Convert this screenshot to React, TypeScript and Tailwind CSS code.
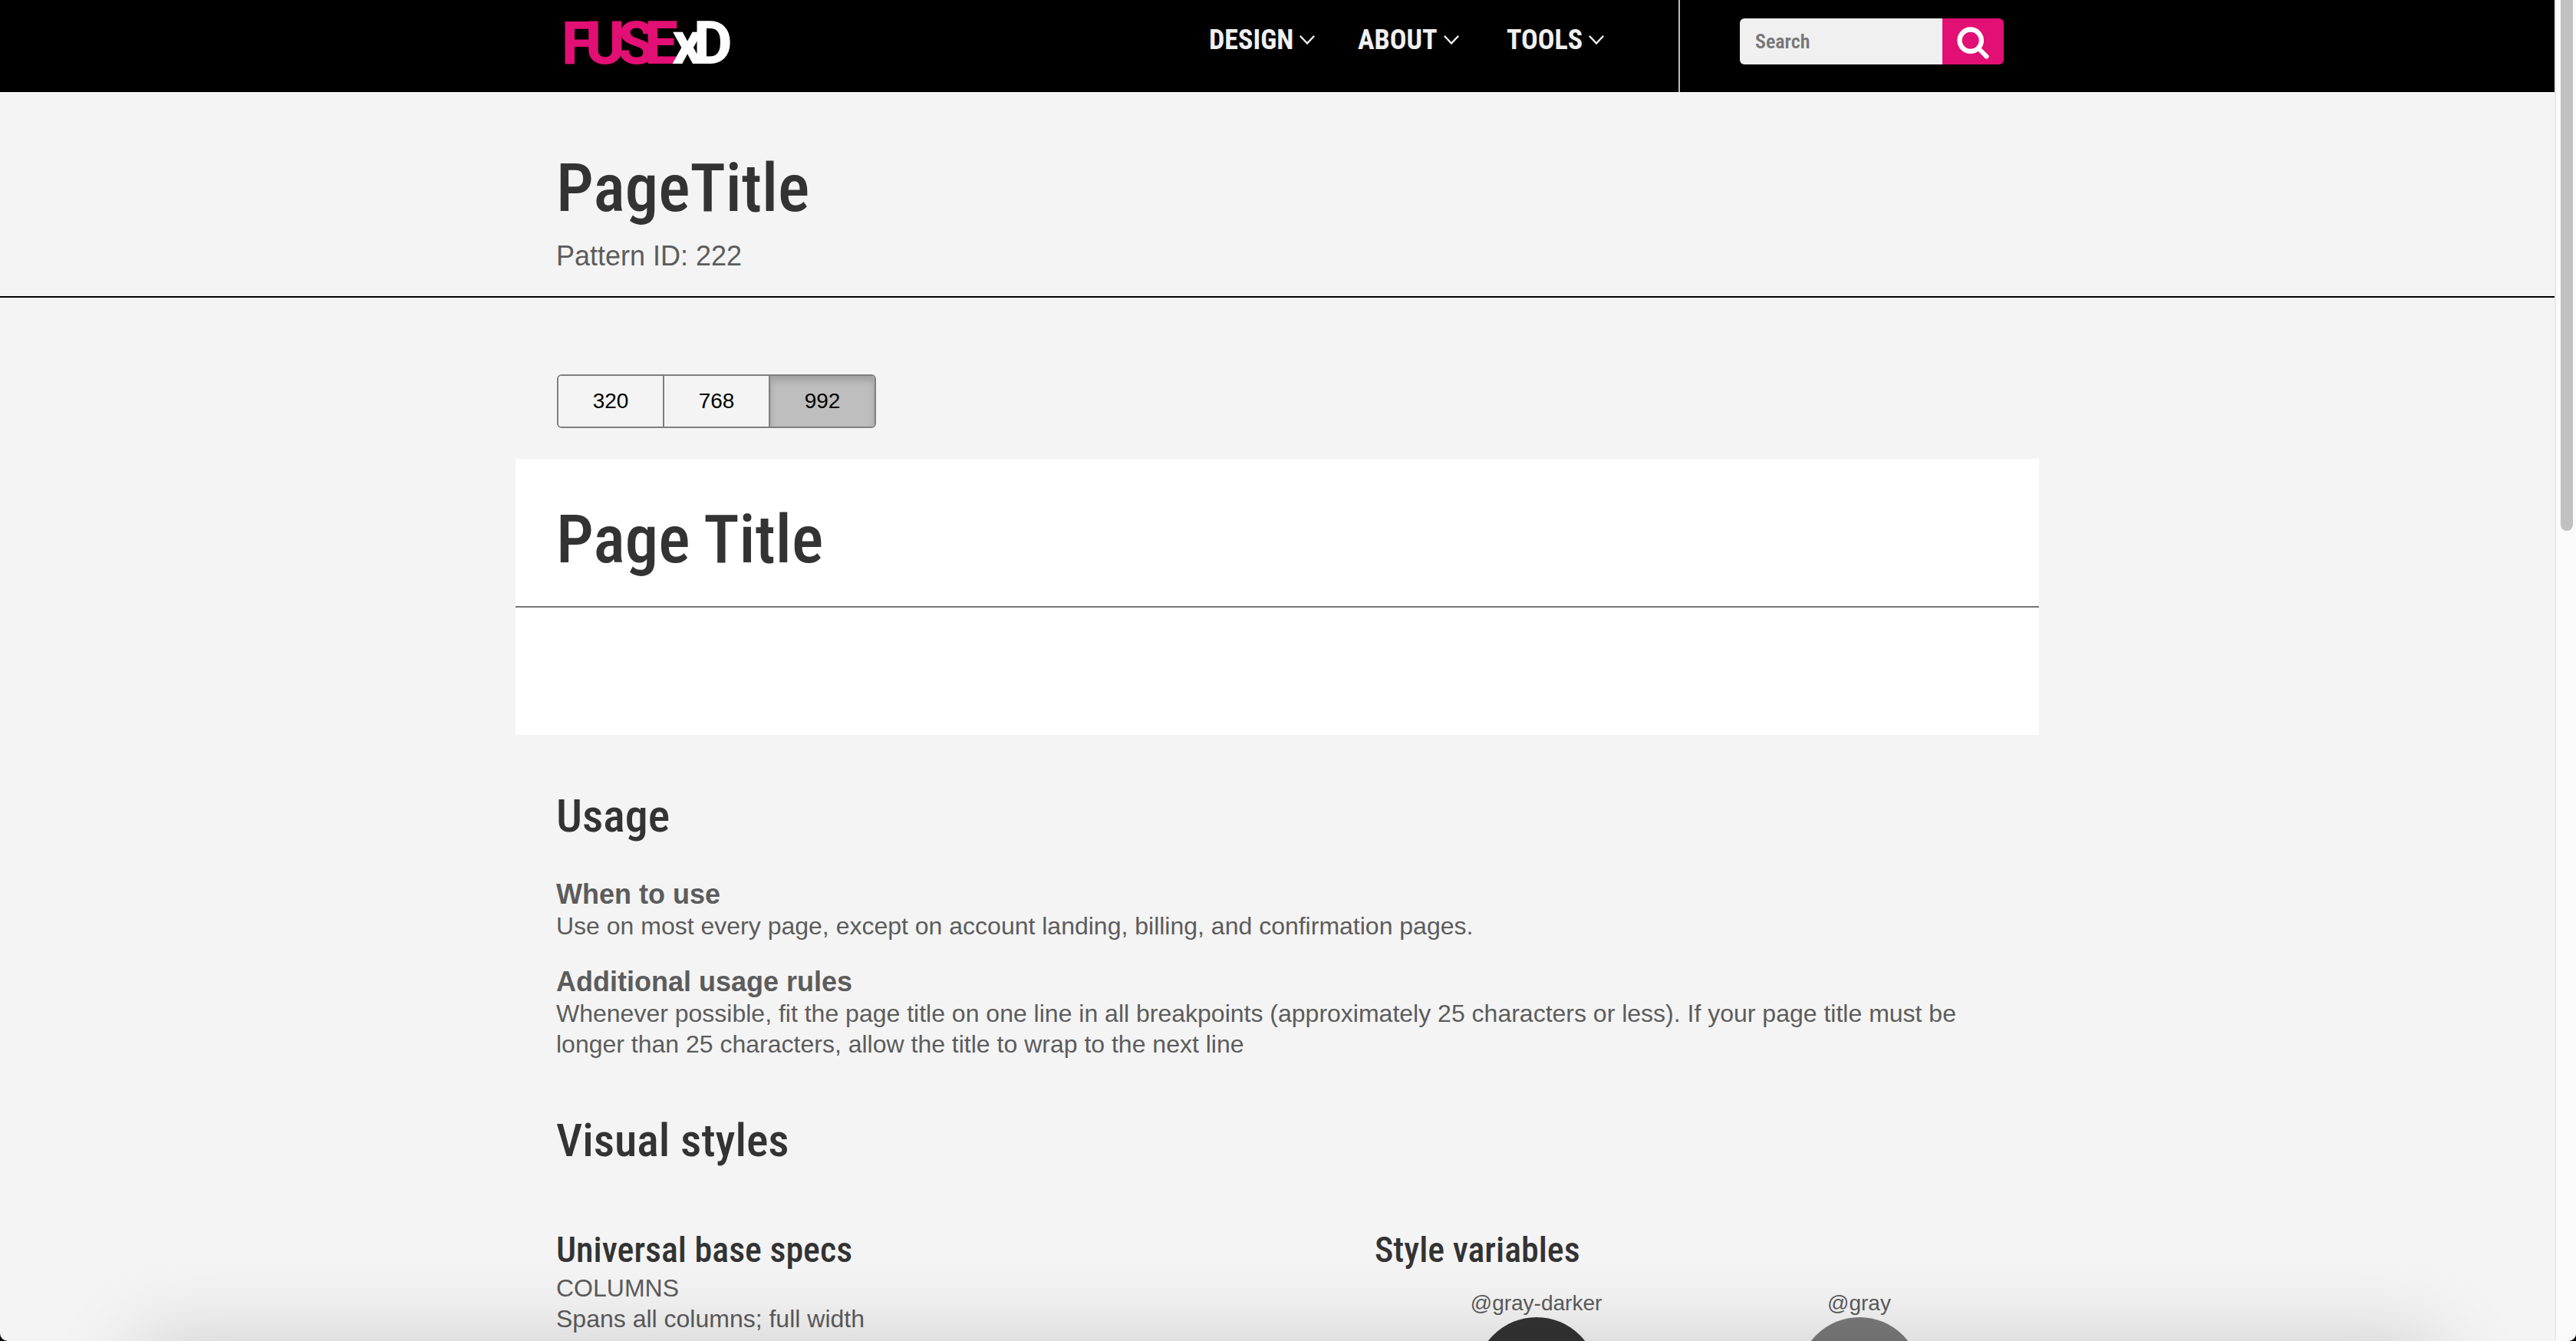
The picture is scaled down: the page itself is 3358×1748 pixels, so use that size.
import React from "react";

const display = "font-['Roboto_Condensed',Roboto,'Liberation_Sans',sans-serif]";

function Logo() {
  return (
    <svg
      role="img"
      aria-label="FUSExD"
      viewBox="0 0 240 120"
      className="h-[120px] w-60"
      fontFamily="Roboto, sans-serif"
      fontWeight="800"
      fontSize="78"
    >
      <text y="83">
        <tspan x="15 46 88 123" fill="#e20f74">
          FUSE
        </tspan>
        <tspan x="159 187" fill="#ffffff">
          xD
        </tspan>
      </text>
    </svg>
  );
}

function Chevron() {
  return (
    <svg viewBox="0 0 20 12" className="h-3 w-5" fill="none" stroke="#f0f0f0" strokeWidth="2.4" strokeLinecap="round">
      <path d="M1.5 1.5 L10 10.5 L18.5 1.5" />
    </svg>
  );
}

function Header() {
  return (
    <header className="bg-black">
      <div className="mx-auto flex h-[120px] max-w-[1986px] pr-[46px] pl-[45px]">
        <a href="#home">
          <Logo />
        </a>
        <nav className="ml-auto grid grid-cols-[194px_194px_224px] pt-8">
          {["DESIGN", "ABOUT", "TOOLS"].map((item) => (
            <button
              key={item}
              type="button"
              className={`${display} flex h-10 items-center gap-2 text-4xl leading-10 font-bold text-[#f0f0f0]`}
            >
              {item}
              <Chevron />
            </button>
          ))}
        </nav>
        <div className="border-l-2 border-[#bbbbbb] pt-6 pl-[78px]">
          <form className="flex h-[60px] overflow-hidden rounded-md" onSubmit={(e) => e.preventDefault()}>
            <input
              type="search"
              aria-label="Search"
              placeholder="Search"
              className={`${display} w-[264px] bg-[#f0f0f0] px-5 text-[26px] font-semibold text-[#333333] outline-none placeholder:text-[#777777]`}
            />
            <button type="submit" aria-label="Submit search" className="w-20 bg-[#e20f74]">
              <svg viewBox="0 0 80 60" className="h-[60px] w-20" fill="none" stroke="#ffffff" strokeLinecap="round">
                <circle cx="36.7" cy="28.7" r="14.2" strokeWidth="6.4" />
                <path d="M47 39 L57.6 49.6" strokeWidth="6" />
              </svg>
            </button>
          </form>
        </div>
      </div>
    </header>
  );
}

const sizes = ["320", "768", "992"];

function SizeSwitch() {
  const [active, setActive] = React.useState("992");
  return (
    <div className="flex h-[70px] w-[416px] divide-x-2 divide-[#7f7f7f] overflow-hidden rounded-md border-2 border-[#7f7f7f]">
      {sizes.map((size) => (
        <button
          key={size}
          type="button"
          aria-pressed={size === active}
          onClick={() => setActive(size)}
          className={
            size === active
              ? "flex-1 bg-[#bebebe] text-[28px] text-black shadow-[inset_0_6px_10px_rgba(0,0,0,0.16)]"
              : "flex-1 bg-[#f4f4f4] text-[28px] text-black"
          }
        >
          {size}
        </button>
      ))}
    </div>
  );
}

function Rule({ title, children }: { title: string; children: React.ReactNode }) {
  return (
    <section>
      <h3 className="text-4xl leading-[42px] font-bold">{title}</h3>
      <p>{children}</p>
    </section>
  );
}

function Swatch({ name, color }: { name: string; color: string }) {
  return (
    <figure className="flex flex-col items-center gap-0.5">
      <figcaption className="text-[28px] leading-8">{name}</figcaption>
      <div className={`size-40 rounded-full ${color}`} />
    </figure>
  );
}

export default function App() {
  return (
    <div className="h-screen overflow-hidden bg-black">
      <div className="relative flex h-full overflow-hidden rounded-b-[10px] bg-[#f4f4f4] font-['Liberation_Sans',Arial,sans-serif] text-[32px] leading-10 text-[#5c5c5c]">
        <div className="min-w-0 flex-1">
          <Header />
          <div className="border-b-2 border-black">
            <div className="mx-auto max-w-[1986px] px-[53px] pt-[77px] pb-8">
              <h1 className={`${display} text-[87px] leading-[96px] font-medium text-[#333333]`}>PageTitle</h1>
              <p className="mt-[21px] text-4xl leading-10">Pattern ID: 222</p>
            </div>
          </div>

          <main className="mx-auto max-w-[1986px] pt-[100px]">
            <div className="px-[54px]">
              <SizeSwitch />
            </div>

            <div className="mt-10 bg-white pb-[166px]">
              <div className="border-b-2 border-[#757575] px-[53px] pt-[57px] pb-[39px]">
                <h1 className={`${display} text-[87px] leading-[96px] font-medium text-[#333333]`}>Page Title</h1>
              </div>
            </div>

            <div className="px-[53px]">
              <h2 className={`${display} mt-[72px] text-6xl leading-[68px] font-medium text-[#333333]`}>Usage</h2>
              <div className="mt-[47px] flex flex-col gap-8">
                <Rule title="When to use">
                  Use on most every page, except on account landing, billing, and confirmation pages.
                </Rule>
                <Rule title="Additional usage rules">
                  Whenever possible, fit the page title on one line in all breakpoints (approximately 25 characters or
                  less). If your page title must be longer than 25 characters, allow the title to wrap to the next line
                </Rule>
              </div>

              <h2 className={`${display} mt-[72px] text-6xl leading-[68px] font-medium text-[#333333]`}>
                Visual styles
              </h2>
              <div className="mt-[84px] -mr-[29px] grid grid-cols-[1067fr_842fr]">
                <section>
                  <h3 className={`${display} mb-1.5 text-[46px] leading-[48px] font-medium text-[#333333]`}>
                    Universal base specs
                  </h3>
                  <p>COLUMNS</p>
                  <p>Spans all columns; full width</p>
                </section>
                <section>
                  <h3 className={`${display} mb-[30px] text-[46px] leading-[48px] font-medium text-[#333333]`}>
                    Style variables
                  </h3>
                  <div className="grid grid-cols-2">
                    <Swatch name="@gray-darker" color="bg-[#333333]" />
                    <Swatch name="@gray" color="bg-[#7a7a7a]" />
                  </div>
                </section>
              </div>
            </div>
          </main>
        </div>

        <div aria-hidden="true" className="w-7 border-l-2 border-[#e8e8e8] bg-[#fafafa] px-1.5">
          <div className="h-[692px] w-4 rounded-b-full bg-[#c1c1c1]" />
        </div>

        <div
          aria-hidden="true"
          className="pointer-events-none absolute inset-x-[175px] top-full h-40 shadow-[0_0_110px_rgba(0,0,0,0.16)]"
        />
      </div>
    </div>
  );
}
